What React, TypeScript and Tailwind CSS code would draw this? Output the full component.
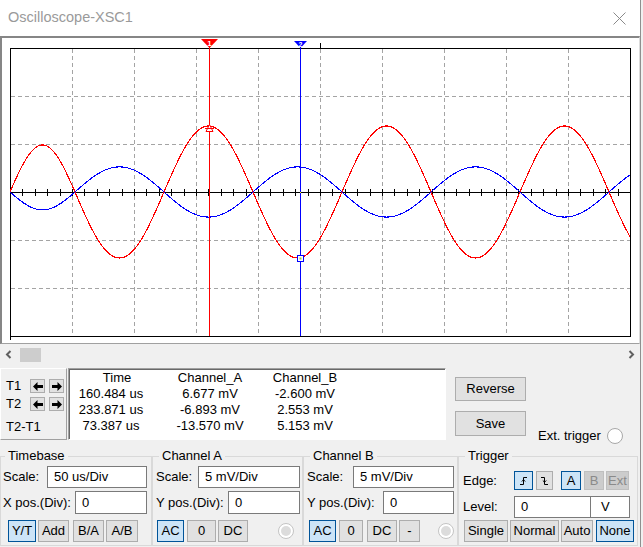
import React from "react";

function redY(x: number) {
  if (x < 75) return 192 - 47 * Math.sin((Math.PI * (x - 10)) / 65);
  return 192 + 66 * Math.sin((2 * Math.PI * (x - 75)) / 178);
}

function Plot() {
  const red: string[] = [];
  const blue: string[] = [];
  for (let x = 10; x <= 630; x++) {
    const r = redY(x);
    red.push(`${x},${r.toFixed(1)}`);
    blue.push(`${x},${(192 - 0.38 * (r - 192)).toFixed(1)}`);
  }
  const vGrid = [72, 134, 196, 258, 320, 382, 444, 506, 568];
  const hGrid = [96, 144, 240, 288];
  const ticks: number[] = [];
  for (let i = 1; i < 50; i++) ticks.push(10 + i * 12.4);

  return (
    <svg width={637} height={305} viewBox="2 38 637 305" className="block">
      {vGrid.map((x) => (
        <line key={"v" + x} x1={x + 0.5} y1={49} x2={x + 0.5} y2={336} stroke="#a4a4a4" strokeDasharray="4 3" />
      ))}
      {hGrid.map((y) => (
        <line key={"h" + y} x1={11} y1={y + 0.5} x2={630} y2={y + 0.5} stroke="#a4a4a4" strokeDasharray="4 3" />
      ))}
      <rect x={10.5} y={48.5} width={620} height={288} fill="none" stroke="#000" />
      <line x1={10.5} y1={336} x2={10.5} y2={340} stroke="#000" />
      <line x1={320.5} y1={43} x2={320.5} y2={48} stroke="#000" />
      <line x1={10} y1={192.5} x2={630} y2={192.5} stroke="#000" />
      {ticks.map((x) => (
        <line key={"t" + x} x1={Math.round(x) + 0.5} y1={189} x2={Math.round(x) + 0.5} y2={196} stroke="#000" />
      ))}
      <polyline points={blue.join(" ")} fill="none" stroke="#0000ff" strokeWidth={1.1} shapeRendering="crispEdges" />
      <polyline points={red.join(" ")} fill="none" stroke="#ff0000" strokeWidth={1.1} shapeRendering="crispEdges" />

      {/* cursors */}
      <line x1={209.5} y1={47} x2={209.5} y2={336} stroke="#ff0000" />
      <line x1={300.5} y1={47} x2={300.5} y2={336} stroke="#0000ff" />
      <polygon points="201,39 218,39 209.5,48" fill="#ff0000" />
      <text x={209.5} y={46} fontSize={8} fontWeight="bold" fill="#fff" textAnchor="middle" fontFamily="Liberation Sans, Arial, sans-serif">1</text>
      <polygon points="294,41 307,41 300.5,48" fill="#0000ff" />
      <text x={300.5} y={47} fontSize={7} fontWeight="bold" fill="#fff" textAnchor="middle" fontFamily="Liberation Sans, Arial, sans-serif">2</text>

      {/* markers on traces */}
      <polygon points="206,131.5 213,131.5 209.5,124.5" fill="#fff" stroke="#ff0000" />
      <line x1={205} y1={128.5} x2={214} y2={128.5} stroke="#ff0000" />
      <rect x={297.5} y={255.5} width={6} height={6} fill="#fff" stroke="#0000ff" />
      <rect x={299.5} y={257.5} width={2} height={2} fill="#9acd32" />
      <rect x={300} y={192} width={1} height={1} fill="#ffff00" />
    </svg>
  );
}

function Arrow({ dir }: { dir: "left" | "right" }) {
  return (
    <svg width="10" height="9" viewBox="0 0 10 9">
      {dir === "left" ? (
        <polygon points="0,4.5 4.5,0 4.5,3 10,3 10,6 4.5,6 4.5,9" fill="#000" />
      ) : (
        <polygon points="10,4.5 5.5,0 5.5,3 0,3 0,6 5.5,6 5.5,9" fill="#000" />
      )}
    </svg>
  );
}

function ArrowBtn({ dir }: { dir: "left" | "right" }) {
  return (
    <div className="w-[15px] h-[14px] bg-[#e1e1e1] border border-[#adadad] flex items-center justify-center">
      <Arrow dir={dir} />
    </div>
  );
}

function Btn({
  children,
  className,
  sel,
  dis,
}: {
  children: React.ReactNode;
  className: string;
  sel?: boolean;
  dis?: boolean;
}) {
  const tone = sel
    ? "bg-[#cce4f7] border-[#005499]"
    : dis
    ? "bg-[#cccccc] border-[#bfbfbf] text-[#8a8a8a]"
    : "bg-[#e1e1e1] border-[#adadad]";
  return (
    <div className={`h-full flex items-center justify-center border ${tone} ${className}`}>
      {children}
    </div>
  );
}

function Field({ value, className }: { value: string; className: string }) {
  return (
    <div className={`bg-white border border-[#7a7a7a] flex items-center pl-[6px] ${className}`}>
      {value}
    </div>
  );
}

function GrayRadio() {
  return (
    <div className="w-[16px] h-[16px] rounded-full border border-[#c4c4c4] bg-white p-[2px]">
      <div className="w-full h-full rounded-full bg-[#dcdcdc]" />
    </div>
  );
}

export default function App() {
  return (
    <div className="w-[643px] h-[547px] overflow-hidden flex bg-[#f0f0f0] font-['Liberation_Sans',Arial,sans-serif] text-[13px] text-black">
      <div className="w-[640px] flex flex-col">
        {/* title bar */}
        <div className="h-[36px] bg-white flex items-center justify-between pl-[8px] pr-[14px]">
          <span className="text-[14.5px] text-[#9a9a9a]">Oscilloscope-XSC1</span>
          <svg width="13" height="13" viewBox="0 0 13 13">
            <path d="M0.5 0.5 L12.5 12.5 M12.5 0.5 L0.5 12.5" stroke="#8a8a8a" strokeWidth="1" />
          </svg>
        </div>

        {/* scope screen */}
        <div className="h-[308px] bg-white border-t-2 border-l-2 border-[#868686] border-b border-b-[#a0a0a0] border-r border-r-[#dcdcdc]">
          <Plot />
        </div>

        {/* scrollbar */}
        <div className="h-[24px] flex items-start">
          <div className="w-[17px] h-[21px] flex items-center justify-center">
            <svg width="7" height="9" viewBox="0 0 7 9">
              <polyline points="5.5,1 2,4.5 5.5,8" fill="none" stroke="#606060" strokeWidth="2" />
            </svg>
          </div>
          <div className="ml-[3px] mt-[4px] w-[21px] h-[14px] bg-[#cdcdcd]" />
          <div className="ml-auto w-[18px] h-[21px] flex items-center justify-center">
            <svg width="7" height="9" viewBox="0 0 7 9">
              <polyline points="1.5,1 5,4.5 1.5,8" fill="none" stroke="#606060" strokeWidth="2" />
            </svg>
          </div>
        </div>

        {/* readout row */}
        <div className="h-[73px] flex">
          <div className="w-[67px] h-[72px] border border-white border-b-[#a0a0a0] border-r-[#a0a0a0] pl-[5px] pt-[10px] flex flex-col">
            <div className="h-[14px] flex items-center">
              <span className="w-[24px]">T1</span>
              <ArrowBtn dir="left" />
              <div className="w-[4px]" />
              <ArrowBtn dir="right" />
            </div>
            <div className="mt-[4px] h-[14px] flex items-center">
              <span className="w-[24px]">T2</span>
              <ArrowBtn dir="left" />
              <div className="w-[4px]" />
              <ArrowBtn dir="right" />
            </div>
            <div className="mt-[8px] leading-[16px]">T2-T1</div>
          </div>

          <div className="ml-[1px] w-[378px] h-[72px] bg-white border border-[#a0a0a0] border-b-white border-r-white shadow-[inset_1px_1px_0_#696969] pt-[1px] pl-[1px] grid grid-cols-[82px_116px_74px] leading-[16px] text-center content-start">
            <div className="pl-[12px]">Time</div>
            <div>Channel_A</div>
            <div>Channel_B</div>
            <div>160.484 us</div>
            <div>6.677 mV</div>
            <div>-2.600 mV</div>
            <div>233.871 us</div>
            <div>-6.893 mV</div>
            <div>2.553 mV</div>
            <div>73.387 us</div>
            <div>-13.570 mV</div>
            <div>5.153 mV</div>
          </div>

          <div className="ml-[9px] pt-[9px] w-[71px] flex flex-col gap-[10px]">
            <div className="h-[24px] bg-[#e1e1e1] border border-[#adadad] flex items-center justify-center">Reverse</div>
            <div className="h-[25px] bg-[#e1e1e1] border border-[#adadad] flex items-center justify-center">Save</div>
          </div>

          <div className="ml-[12px] pt-[60px]">
            <div className="h-[16px] flex items-center gap-[6px]">
              <span>Ext. trigger</span>
              <div className="w-[16px] h-[16px] rounded-full border border-[#a8a8a8] bg-white" />
            </div>
          </div>
        </div>

        {/* control groups */}
        <div className="mt-[7px] flex">
          <fieldset className="w-[152px] h-[98px] border border-[#d9d9d9]">
            <legend className="ml-[4px] px-[3px] leading-[16px]">Timebase</legend>
            <div className="pl-[2px] pr-[4px] flex flex-col">
              <div className="mt-[2px] h-[22px] flex items-center">
                <span>Scale:</span>
                <Field value="50 us/Div" className="ml-auto w-[100px] h-full" />
              </div>
              <div className="mt-[3px] h-[23px] flex items-center">
                <span>X pos.(Div):</span>
                <Field value="0" className="ml-auto w-[72px] h-full" />
              </div>
              <div className="mt-[6px] h-[22px] flex pl-[5px]">
                <Btn sel className="w-[28px]">Y/T</Btn>
                <Btn className="ml-[2px] w-[31px]">Add</Btn>
                <Btn className="ml-[4px] w-[31px]">B/A</Btn>
                <Btn className="ml-[2px] w-[32px]">A/B</Btn>
              </div>
            </div>
          </fieldset>

          <fieldset className="w-[151px] h-[98px] border border-[#d9d9d9]">
            <legend className="ml-[6px] px-[3px] leading-[16px]">Channel A</legend>
            <div className="pl-[3px] pr-[2px] flex flex-col">
              <div className="mt-[2px] h-[22px] flex items-center">
                <span>Scale:</span>
                <Field value="5 mV/Div" className="ml-auto w-[102px] h-full" />
              </div>
              <div className="mt-[3px] h-[23px] flex items-center">
                <span>Y pos.(Div):</span>
                <Field value="0" className="ml-auto w-[72px] h-full" />
              </div>
              <div className="mt-[6px] h-[22px] flex items-center pl-[1px]">
                <Btn sel className="w-[27px]">AC</Btn>
                <Btn className="ml-[3px] w-[29px]">0</Btn>
                <Btn className="ml-[2px] w-[30px]">DC</Btn>
                <div className="ml-[30px]">
                  <GrayRadio />
                </div>
              </div>
            </div>
          </fieldset>

          <fieldset className="w-[154px] h-[98px] border border-[#d9d9d9]">
            <legend className="ml-[6px] px-[3px] leading-[16px]">Channel B</legend>
            <div className="pl-[3px] pr-[3px] flex flex-col">
              <div className="mt-[2px] h-[22px] flex items-center">
                <span>Scale:</span>
                <Field value="5 mV/Div" className="ml-auto w-[101px] h-full" />
              </div>
              <div className="mt-[3px] h-[23px] flex items-center">
                <span>Y pos.(Div):</span>
                <Field value="0" className="ml-auto w-[71px] h-full" />
              </div>
              <div className="mt-[6px] h-[22px] flex items-center pl-[2px]">
                <Btn sel className="w-[27px]">AC</Btn>
                <Btn className="ml-[3px] w-[24px]">0</Btn>
                <Btn className="ml-[4px] w-[30px]">DC</Btn>
                <Btn className="ml-[2px] w-[21px]">-</Btn>
                <div className="ml-[18px]">
                  <GrayRadio />
                </div>
              </div>
            </div>
          </fieldset>

          <fieldset className="w-[180px] h-[98px] border border-[#d9d9d9]">
            <legend className="ml-[6px] px-[3px] leading-[16px]">Trigger</legend>
            <div className="pl-[4px] flex flex-col">
              <div className="mt-[7px] h-[19px] flex items-center">
                <span className="w-[51px]">Edge:</span>
                <Btn sel className="w-[19px]">
                  <svg width="10" height="10" viewBox="0 0 10 10">
                    <path d="M1 8.5 H4.5 V1.5 H8" fill="none" stroke="#000" />
                    <path d="M2.8 5.5 L4.5 3.8 L6.2 5.5" fill="none" stroke="#000" />
                  </svg>
                </Btn>
                <Btn className="ml-[3px] w-[17px]">
                  <svg width="10" height="10" viewBox="0 0 10 10">
                    <path d="M1 1.5 H4.5 V8.5 H8" fill="none" stroke="#000" />
                    <path d="M2.8 4.5 L4.5 6.2 L6.2 4.5" fill="none" stroke="#000" />
                  </svg>
                </Btn>
                <Btn sel className="ml-[8px] w-[20px]">A</Btn>
                <Btn dis className="ml-[3px] w-[20px]">B</Btn>
                <Btn dis className="ml-[2px] w-[23px]">Ext</Btn>
              </div>
              <div className="mt-[6px] h-[22px] flex items-center">
                <span className="w-[51px]">Level:</span>
                <div className="h-full flex border border-[#7a7a7a] bg-white">
                  <div className="w-[76px] pl-[6px] flex items-center border-r border-[#7a7a7a]">0</div>
                  <div className="w-[38px] pl-[10px] flex items-center">V</div>
                </div>
              </div>
              <div className="mt-[2px] h-[22px] flex items-center pl-[1px]">
                <Btn className="w-[44px]">Single</Btn>
                <Btn className="ml-[2px] w-[49px]">Normal</Btn>
                <Btn className="ml-[2px] w-[32px]">Auto</Btn>
                <Btn sel className="ml-[3px] w-[38px]">None</Btn>
              </div>
            </div>
          </fieldset>
        </div>
      </div>
      <div className="w-[3px] border-l border-[#8f8f8f] bg-[#f0f0f0]" />
    </div>
  );
}
